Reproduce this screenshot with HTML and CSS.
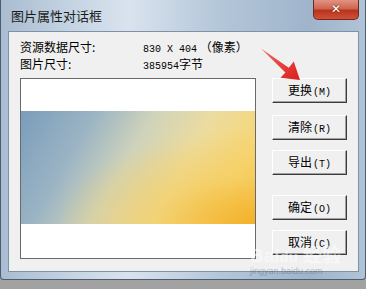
FILE: index.html
```html
<!DOCTYPE html>
<html lang="zh-CN">
<head>
    <meta charset="UTF-8">
    <title>图片属性对话框</title>
    <link rel="stylesheet" href="styles.css">
</head>
<body>
    <div class="window">
        <div class="titlebar">
            <span class="title">图片属性对话框</span>
            <span class="close">&#x2715;</span>
        </div>
        <div class="client">
            <div class="info">
                <div class="row"><span class="label">资源数据尺寸:</span><span class="value"><span class="mono">830 X 404</span> （像素）</span></div>
                <div class="row"><span class="label">图片尺寸:</span><span class="value"><span class="mono">385954</span>字节</span></div>
            </div>
            <div class="main">
                <div class="picture-box">
                    <div class="picture"></div>
                </div>
                <div class="buttons">
                    <button class="btn">更换<span class="key">(M)</span></button>
                    <button class="btn gap-1">清除<span class="key">(R)</span></button>
                    <button class="btn gap-2">导出<span class="key">(T)</span></button>
                    <button class="btn gap-3">确定<span class="key">(O)</span></button>
                    <button class="btn gap-2">取消<span class="key">(C)</span></button>
                </div>
            </div>
        </div>
    </div>

    <!-- annotation arrow -->
    <svg class="arrow" width="366" height="289" viewBox="0 0 366 289">
        <defs>
            <linearGradient id="red" x1="0" y1="0" x2="1" y2="1">
                <stop offset="0" stop-color="#f26a5e"/>
                <stop offset="1" stop-color="#d81e1e"/>
            </linearGradient>
        </defs>
        <polygon points="261,48.5 288.8,67.8 293.8,61.5 300,80 280.5,77.8 285.4,72.4" fill="url(#red)"/>
    </svg>

    <div class="watermark">
        <div class="wm-big">Bai<span class="wm-du">du</span> 经验</div>
        <div class="wm-small">jingyan.baidu.com</div>
    </div>
</body>
</html>
```

FILE: styles.css
```css
body{
    margin: 0;
    width: 366px;
    height: 289px;
    background: #a2a2a2;
    font-family: "Noto Sans CJK SC", sans-serif;
    font-size: 12px;
    color: #000;
    overflow: hidden;
    position: relative;
}
.window{
    box-sizing: border-box;
    width: 366px;
    height: 280px;
    border: 1px solid #4d5d70;
    border-top: none;
    border-radius: 0 0 4px 4px;
    background: linear-gradient(90deg, #a9bcd1 0%, #c3d2e1 18%, #d9e3ee 35%, #b4c6d9 60%, #9fb4cb 85%, #b1c3d6 100%);
    padding: 0 6px 7px 7px;
    display: flex;
    flex-direction: column;
}
.titlebar{
    height: 31px;
    display: flex;
    justify-content: space-between;
    align-items: flex-start;
}
.title{
    margin-top: 8px;
    padding-left: 3px;
    font-size: 13px;
    color: #1b1b1b;
    line-height: 16px;
}
.close{
    width: 46px;
    height: 20px;
    box-sizing: border-box;
    border: 1px solid #6b2a22;
    border-top: none;
    border-radius: 0 0 5px 5px;
    background: linear-gradient(#e09384 0%, #d0654f 45%, #b9341e 55%, #d24f36 100%);
    color: #fff;
    font-family: "DejaVu Sans", sans-serif;
    font-weight: bold;
    font-size: 12px;
    text-align: center;
    line-height: 18px;
    text-shadow: 0 0 2px #5a1a10;
}
.client{
    flex: 1;
    background: #f0f0f0;
    border: 1px solid #7f91a6;
    padding: 6px 11px 11px 11px;
    display: flex;
    flex-direction: column;
}
.row{
    display: flex;
    height: 17px;
    line-height: 17px;
}
.label{
    width: 123px;
}
.mono{
    font-family: "Liberation Mono", monospace;
    font-size: 10px;
}
.main{
    margin-top: 6px;
    display: flex;
    gap: 16px;
}
.picture-box{
    box-sizing: border-box;
    width: 237px;
    height: 181px;
    border: 1px solid #6a6a6a;
    background: #fff;
    padding-top: 32px;
}
.picture{
    height: 113px;
    background:
        radial-gradient(ellipse at 100% 100%, rgba(243, 176, 40, 0.95) 0%, rgba(246, 204, 90, 0.6) 30%, rgba(246, 214, 120, 0) 60%),
        linear-gradient(120deg, #7a9dbb 0%, #9bb4c4 25%, #cfd3bb 45%, #ecdca0 65%, #f6d675 85%, #f4c04a 100%);
}
.buttons{
    display: flex;
    flex-direction: column;
}
.btn{
    box-sizing: border-box;
    width: 75px;
    height: 25px;
    padding: 0;
    background: #f0f0f0;
    border: 1px solid;
    border-color: #ffffff #3c3c3c #3c3c3c #ffffff;
    box-shadow: inset -1px -1px #a0a0a0;
    font-family: "Noto Sans CJK SC", sans-serif;
    font-size: 12px;
    color: #000;
    line-height: 22px;
}
.key{
    font-family: "Liberation Mono", monospace;
    font-size: 10px;
    margin-left: 1px;
}
.gap-1{
    margin-top: 12px;
}
.gap-2{
    margin-top: 10px;
}
.gap-3{
    margin-top: 20px;
}
.arrow{
    position: absolute;
    left: 0;
    top: 0;
    pointer-events: none;
}
.watermark{
    position: absolute;
    left: 250px;
    top: 247px;
    color: rgba(255, 255, 255, 0.55);
    pointer-events: none;
}
.wm-big{
    font-family: "Liberation Sans", sans-serif;
    font-size: 19px;
    font-weight: bold;
    line-height: 18px;
}
.wm-du{
    font-size: 15px;
}
.wm-small{
    font-family: "Liberation Sans", sans-serif;
    font-size: 9px;
    line-height: 11px;
    color: rgba(60, 70, 90, 0.35);
}
```
